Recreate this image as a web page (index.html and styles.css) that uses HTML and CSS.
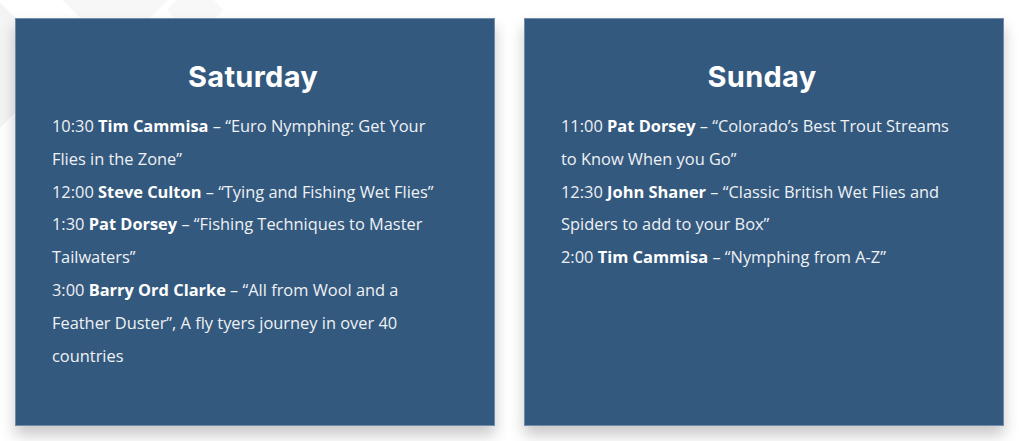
FILE: index.html
```html
<!DOCTYPE html>
<html lang="en">
<head>
<meta charset="utf-8">
<title>Schedule</title>
<link rel="stylesheet" href="styles.css">
</head>
<body>
<div class="bg">
  <span class="shape s1"></span>
  <span class="shape s2"></span>
  <span class="shape s3"></span>
</div>
<main class="days">
  <section class="card">
    <h2 class="day">Saturday</h2>
    <p class="item">10:30 <strong>Tim Cammisa</strong> – “Euro Nymphing: Get Your Flies in the Zone”</p>
    <p class="item">12:00 <strong>Steve Culton</strong> – “Tying and Fishing Wet Flies”</p>
    <p class="item">1:30 <strong>Pat Dorsey</strong> – “Fishing Techniques to Master Tailwaters”</p>
    <p class="item">3:00 <strong>Barry Ord Clarke</strong> – “All from Wool and a Feather Duster”, A fly tyers journey in over 40 countries</p>
  </section>
  <section class="card">
    <h2 class="day">Sunday</h2>
    <p class="item">11:00 <strong>Pat Dorsey</strong> – “Colorado’s Best Trout Streams to Know When you Go”</p>
    <p class="item">12:30 <strong>John Shaner</strong> – “Classic British Wet Flies and Spiders to add to your Box”</p>
    <p class="item">2:00 <strong>Tim Cammisa</strong> – “Nymphing from A-Z”</p>
  </section>
</main>
</body>
</html>
```

FILE: styles.css
```css
html, body {
  margin: 0;
  padding: 0;
  background: #ffffff;
}

body {
  width: 1023px;
  height: 441px;
  overflow: hidden;
  position: relative;
  font-family: "Open Sans", "Liberation Sans", sans-serif;
}

.bg {
  position: absolute;
  inset: 0;
  z-index: 0;
  pointer-events: none;
}

.shape {
  position: absolute;
  display: block;
  transform: rotate(45deg);
}

.s1 {
  left: -70px;
  top: 10px;
  width: 110px;
  height: 110px;
  background: #f4f4f4;
}

.s2 {
  left: 60px;
  top: -80px;
  width: 110px;
  height: 110px;
  background: #f7f7f7;
}

.s3 {
  left: 175px;
  top: -10px;
  width: 40px;
  height: 40px;
  background: #f8f8f8;
}

.days {
  position: relative;
  z-index: 1;
  display: flex;
  gap: 29px;
  padding: 18px 0 0 15px;
}

.card {
  box-sizing: border-box;
  width: 480px;
  height: 408px;
  background: #34597e;
  border: 1px solid #6f8cab;
  box-shadow: 0 9px 14px rgba(0, 0, 0, 0.22);
  padding: 36px 40px 0 36px;
  color: #eef1f5;
}

.day {
  margin: 0 0 11px;
  text-align: center;
  font-family: "Inter", "Liberation Sans", sans-serif;
  font-weight: 700;
  font-size: 29px;
  letter-spacing: 0.3px;
  line-height: 44px;
  color: #ffffff;
}

.item {
  margin: 0;
  font-size: 16.4px;
  line-height: 32.8px;
}

.item strong {
  font-weight: 700;
  color: #ffffff;
}
```
